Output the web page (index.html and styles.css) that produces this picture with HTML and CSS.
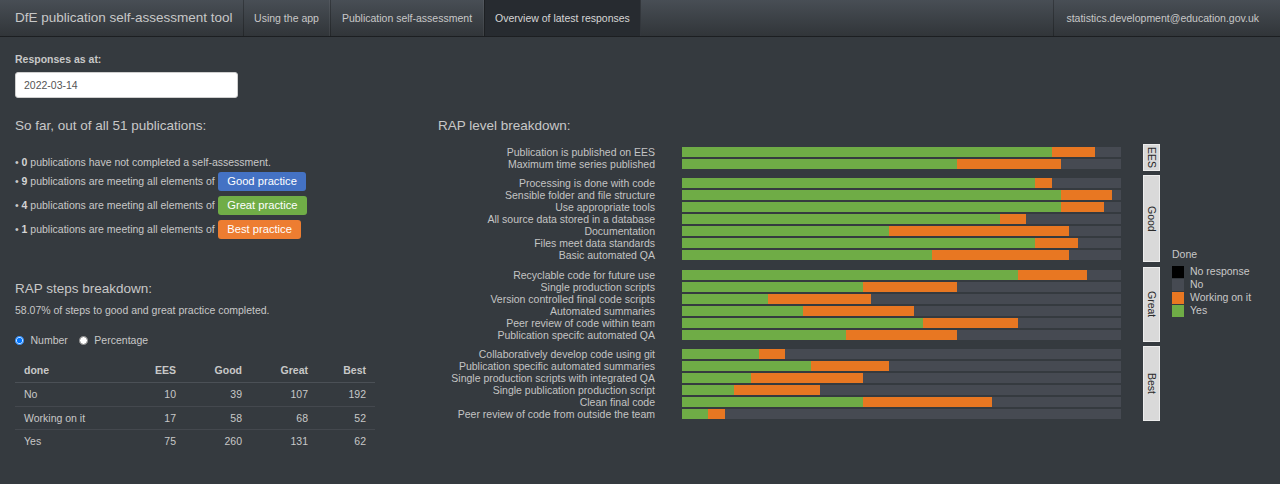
FILE: index.html
```html
<!DOCTYPE html>
<html lang="en">
<head>
<meta charset="utf-8">
<title>DfE publication self-assessment tool</title>
<link rel="stylesheet" href="styles.css">
</head>
<body>
<nav class="navbar">
  <span class="brand">DfE publication self-assessment tool</span>
  <ul class="nav">
    <li><a>Using the app</a></li>
    <li><a>Publication self-assessment</a></li>
    <li class="active"><a>Overview of latest responses</a></li>
  </ul>
  <ul class="nav nav-right">
    <li><a>statistics.development@education.gov.uk</a></li>
  </ul>
</nav>

<main class="page">
  <section class="left">
    <label class="ctl-label">Responses as at:</label>
    <div class="date-input">2022-03-14</div>

    <h4 class="heading">So far, out of all 51 publications:</h4>
    <div class="summary">
      <div class="line line-plain">• <b>0</b> publications have not completed a self-assessment.</div>
      <div class="line">• <b>9</b> publications are meeting all elements of <span class="badge badge-good">Good practice</span></div>
      <div class="line">• <b>4</b> publications are meeting all elements of <span class="badge badge-great">Great practice</span></div>
      <div class="line">• <b>1</b> publications are meeting all elements of <span class="badge badge-best">Best practice</span></div>
    </div>

    <h4 class="heading heading-steps">RAP steps breakdown:</h4>
    <p class="pct">58.07% of steps to good and great practice completed.</p>
    <div class="radios">
      <label class="radio"><input type="radio" name="mode" checked><span>Number</span></label>
      <label class="radio"><input type="radio" name="mode"><span>Percentage</span></label>
    </div>

    <table class="steps">
      <colgroup><col class="c-done"><col class="c-num"><col class="c-num"><col class="c-num"><col class="c-last"></colgroup>
      <thead>
        <tr><th class="l">done</th><th>EES</th><th>Good</th><th>Great</th><th>Best</th></tr>
      </thead>
      <tbody>
        <tr><td class="l">No</td><td>10</td><td>39</td><td>107</td><td>192</td></tr>
        <tr><td class="l">Working on it</td><td>17</td><td>58</td><td>68</td><td>52</td></tr>
        <tr><td class="l">Yes</td><td>75</td><td>260</td><td>131</td><td>62</td></tr>
      </tbody>
    </table>
  </section>

  <section class="right">
    <h4 class="heading">RAP level breakdown:</h4>
    <div class="chart">
      <div class="panels">
        <div class="panel">
          <div class="rows">
            <div class="row"><span class="lbl">Publication is published on EES</span><div class="bar"><i class="yes" style="width:84.314%"></i><i class="wip" style="width:9.804%"></i></div></div>
            <div class="row"><span class="lbl">Maximum time series published</span><div class="bar"><i class="yes" style="width:62.745%"></i><i class="wip" style="width:23.529%"></i></div></div>
          </div>
          <div class="strip"><span>EES</span></div>
        </div>
        <div class="panel">
          <div class="rows">
            <div class="row"><span class="lbl">Processing is done with code</span><div class="bar"><i class="yes" style="width:80.392%"></i><i class="wip" style="width:3.922%"></i></div></div>
            <div class="row"><span class="lbl">Sensible folder and file structure</span><div class="bar"><i class="yes" style="width:86.275%"></i><i class="wip" style="width:11.765%"></i></div></div>
            <div class="row"><span class="lbl">Use appropriate tools</span><div class="bar"><i class="yes" style="width:86.275%"></i><i class="wip" style="width:9.804%"></i></div></div>
            <div class="row"><span class="lbl">All source data stored in a database</span><div class="bar"><i class="yes" style="width:72.549%"></i><i class="wip" style="width:5.882%"></i></div></div>
            <div class="row"><span class="lbl">Documentation</span><div class="bar"><i class="yes" style="width:47.059%"></i><i class="wip" style="width:41.176%"></i></div></div>
            <div class="row"><span class="lbl">Files meet data standards</span><div class="bar"><i class="yes" style="width:80.392%"></i><i class="wip" style="width:9.804%"></i></div></div>
            <div class="row"><span class="lbl">Basic automated QA</span><div class="bar"><i class="yes" style="width:56.863%"></i><i class="wip" style="width:31.373%"></i></div></div>
          </div>
          <div class="strip"><span>Good</span></div>
        </div>
        <div class="panel">
          <div class="rows">
            <div class="row"><span class="lbl">Recyclable code for future use</span><div class="bar"><i class="yes" style="width:76.471%"></i><i class="wip" style="width:15.686%"></i></div></div>
            <div class="row"><span class="lbl">Single production scripts</span><div class="bar"><i class="yes" style="width:41.176%"></i><i class="wip" style="width:21.569%"></i></div></div>
            <div class="row"><span class="lbl">Version controlled final code scripts</span><div class="bar"><i class="yes" style="width:19.608%"></i><i class="wip" style="width:23.529%"></i></div></div>
            <div class="row"><span class="lbl">Automated summaries</span><div class="bar"><i class="yes" style="width:27.451%"></i><i class="wip" style="width:25.490%"></i></div></div>
            <div class="row"><span class="lbl">Peer review of code within team</span><div class="bar"><i class="yes" style="width:54.902%"></i><i class="wip" style="width:21.569%"></i></div></div>
            <div class="row"><span class="lbl">Publication specifc automated QA</span><div class="bar"><i class="yes" style="width:37.255%"></i><i class="wip" style="width:25.490%"></i></div></div>
          </div>
          <div class="strip"><span>Great</span></div>
        </div>
        <div class="panel">
          <div class="rows">
            <div class="row"><span class="lbl">Collaboratively develop code using git</span><div class="bar"><i class="yes" style="width:17.647%"></i><i class="wip" style="width:5.882%"></i></div></div>
            <div class="row"><span class="lbl">Publication specific automated summaries</span><div class="bar"><i class="yes" style="width:29.412%"></i><i class="wip" style="width:17.647%"></i></div></div>
            <div class="row"><span class="lbl">Single production scripts with integrated QA</span><div class="bar"><i class="yes" style="width:15.686%"></i><i class="wip" style="width:25.490%"></i></div></div>
            <div class="row"><span class="lbl">Single publication production script</span><div class="bar"><i class="yes" style="width:11.765%"></i><i class="wip" style="width:19.608%"></i></div></div>
            <div class="row"><span class="lbl">Clean final code</span><div class="bar"><i class="yes" style="width:41.176%"></i><i class="wip" style="width:29.412%"></i></div></div>
            <div class="row"><span class="lbl">Peer review of code from outside the team</span><div class="bar"><i class="yes" style="width:5.882%"></i><i class="wip" style="width:3.922%"></i></div></div>
          </div>
          <div class="strip"><span>Best</span></div>
        </div>
      </div>

      <div class="legend">
        <div class="legend-title">Done</div>
        <div class="key"><span class="sw sw-none"></span><span>No response</span></div>
        <div class="key"><span class="sw sw-no"></span><span>No</span></div>
        <div class="key"><span class="sw sw-wip"></span><span>Working on it</span></div>
        <div class="key"><span class="sw sw-yes"></span><span>Yes</span></div>
      </div>
    </div>
  </section>
</main>
</body>
</html>
```

FILE: styles.css
```css
* { box-sizing: border-box; }

html, body { margin: 0; padding: 0; }

body {
  background: #353a3f;
  color: #c8c8c8;
  font-family: "Liberation Sans", Arial, sans-serif;
  font-size: 10.5px;
  line-height: 15px;
}

/* ---------- navbar ---------- */
.navbar {
  display: flex;
  height: 37px;
  background-image: linear-gradient(#484e55, #3a3f44 60%, #313539);
  border-bottom: 1px solid rgba(0, 0, 0, 0.6);
}

.brand {
  padding: 0 10px 0 15px;
  font-size: 13.5px;
  line-height: 36px;
  color: #c8c8c8;
  white-space: nowrap;
}

.nav {
  display: flex;
  list-style: none;
  margin: 0;
  padding: 0;
}

.nav a {
  display: block;
  padding: 0 10.5px;
  height: 36px;
  line-height: 36px;
  color: #c8c8c8;
  white-space: nowrap;
  border-left: 1px solid rgba(0, 0, 0, 0.25);
  border-right: 1px solid rgba(255, 255, 255, 0.06);
}

.nav .active a {
  background: #272b30;
  color: #d6d6d6;
}

.nav-right {
  margin-left: auto;
  margin-right: 10px;
}

.nav-right a {
  padding: 0 11px 0 12px;
  border-right: none;
}

/* ---------- page layout ---------- */
.page {
  display: flex;
  padding: 0 15px;
}

.left {
  width: 408px;
  flex: none;
  padding-top: 14.8px;
}

.right {
  flex: 1;
  padding-left: 15px;
}

.ctl-label {
  display: block;
  font-weight: bold;
  margin-bottom: 5.5px;
}

.date-input {
  width: 223px;
  height: 26px;
  background: #fff;
  border: 1px solid #cfcfcf;
  border-radius: 3px;
  color: #555;
  line-height: 24px;
  padding-left: 8px;
}

.heading {
  margin: 19.3px 0 0;
  font-size: 13.5px;
  font-weight: normal;
  line-height: 15px;
  color: #c8c8c8;
}

.right .heading {
  margin-top: 80.6px;
}

.summary {
  margin-top: 22.2px;
}

.line {
  height: 19px;
  line-height: 19px;
  margin-bottom: 5.3px;
  white-space: nowrap;
}

.line-plain {
  height: 15px;
  line-height: 15px;
  margin-bottom: 1.9px;
}

.line b {
  color: #d4d4d4;
}

.badge {
  display: inline-block;
  vertical-align: top;
  height: 19px;
  line-height: 19px;
  padding: 0 9.5px;
  border-radius: 3px;
  color: #fff;
  font-size: 11.2px;
}

.badge-good { background: #4472c4; }
.badge-great { background: #70ad47; }
.badge-best { background: #ed7d31; }

.heading-steps {
  margin-top: 41.6px;
}

.pct {
  margin: 7.3px 0 0;
}

.radios {
  display: flex;
  gap: 11px;
  margin-top: 15px;
  height: 15px;
}

.radio {
  display: flex;
  align-items: center;
  gap: 6.5px;
}

.radio input {
  margin: 0;
  width: 9px;
  height: 9px;
}

.steps {
  margin-top: 11px;
  width: 360px;
  border-collapse: collapse;
  table-layout: fixed;
}

.c-done { width: 104px; }
.c-num { width: 66px; }
.c-last { width: 58px; }

.steps th,
.steps td {
  padding: 4.2px 9px 3.5px;
  line-height: 15px;
  text-align: right;
  font-weight: normal;
}

.steps th {
  font-weight: bold;
  border-bottom: 1px solid #4b5056;
}

.steps td {
  border-bottom: 1px solid #44484e;
}

.steps tbody tr:last-child td {
  border-bottom: none;
}

.steps .l {
  text-align: left;
}

/* ---------- chart ---------- */
.chart {
  display: flex;
  align-items: center;
  margin-top: 11.4px;
}

.panels {
  display: flex;
  flex-direction: column;
  gap: 4.5px;
}

.panel {
  display: flex;
}

.rows {
  padding: 2px 0 1px;
}

.row {
  display: flex;
  align-items: center;
  height: 12px;
}

.lbl {
  width: 217px;
  text-align: right;
  font-size: 10.5px;
  line-height: 12px;
  white-space: nowrap;
  color: #c4c4c4;
}

.bar {
  margin-left: 27px;
  width: 439px;
  height: 10px;
  background: #464a52;
  display: flex;
}

.bar i {
  display: block;
  height: 100%;
}

.bar .yes { background: #6fac46; }
.bar .wip { background: #e87722; }

.strip {
  margin-left: 22px;
  width: 17px;
  background: #d9d9d9;
  border: 1px solid #ececec;
  display: flex;
  align-items: center;
  justify-content: center;
}

.strip span {
  writing-mode: vertical-rl;
  color: #2a2a2a;
  font-size: 10.5px;
  line-height: 12px;
}

.legend {
  margin-left: 12px;
}

.legend-title {
  font-size: 10.5px;
  line-height: 13px;
  margin-bottom: 4.5px;
}

.key {
  display: flex;
  align-items: center;
  height: 13px;
  font-size: 10.5px;
}

.sw {
  width: 12px;
  height: 12px;
  margin-right: 6px;
}

.sw-none { background: #000; }
.sw-no { background: #464a52; }
.sw-wip { background: #e87722; }
.sw-yes { background: #6fac46; }
```
